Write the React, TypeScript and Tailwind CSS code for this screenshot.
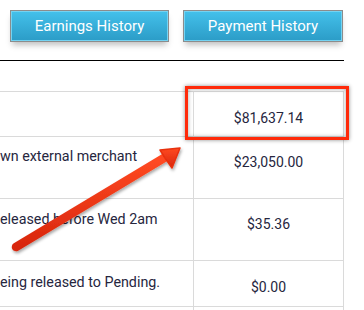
import React from "react";

const Btn = ({ label, w }: { label: string; w: string }) => (
  <div className={`${w} h-[32px] border border-[#8c8c8c] shadow-[0_5px_6px_-2px_rgba(0,0,0,0.25)]`}>
    <div className="h-full w-full border border-[#74d3f2] bg-gradient-to-b from-[#43c0ea] to-[#2c9dc8] flex items-center justify-center text-white text-[15px] leading-none font-normal">
      {label}
    </div>
  </div>
);

export default function App() {
  return (
    <div className="relative w-[364px] h-[310px] bg-white overflow-hidden font-['Roboto',sans-serif] text-[#26263e]">
      <div className="flex pt-[10px] pl-[10px] gap-[14px]">
        <Btn label="Earnings History" w="w-[159px]" />
        <Btn label="Payment History" w="w-[160px]" />
      </div>
      <div className="mt-[18px] w-[344px] h-px bg-black" />
      <div className="mt-[30px] w-[344px] border-t border-r border-[#dadada] text-[14px] leading-[20px]">
        <div className="flex h-[45px] border-b border-[#dadada]">
          <div className="w-[194px] border-r border-[#dadada]" />
          <div className="flex-1 text-center pt-[16px]">$81,637.14</div>
        </div>
        <div className="flex h-[62px] border-b border-[#dadada]">
          <div className="w-[194px] border-r border-[#dadada] pt-[9px] whitespace-nowrap overflow-hidden text-[14.3px]">wn external merchant</div>
          <div className="flex-1 text-center pt-[15px]">$23,050.00</div>
        </div>
        <div className="flex h-[62px] border-b border-[#dadada]">
          <div className="w-[194px] border-r border-[#dadada] pt-[10px] whitespace-nowrap overflow-hidden text-[14.3px]">eleased before Wed 2am</div>
          <div className="flex-1 text-center pt-[15px]">$35.36</div>
        </div>
        <div className="flex h-[46px] border-b border-[#dadada]">
          <div className="w-[194px] border-r border-[#dadada] pt-[11px] whitespace-nowrap overflow-hidden text-[14.3px]">eing released to Pending.</div>
          <div className="flex-1 text-center pt-[16px]">$0.00</div>
        </div>
        <div className="flex h-[40px]">
          <div className="w-[194px] border-r border-[#dadada]" />
          <div className="flex-1" />
        </div>
      </div>

      <div className="absolute left-[185px] top-[86px] w-[164px] h-[54px] border-[3.5px] border-[#ff2a0a] shadow-[0_0_4px_rgba(0,0,0,0.45),inset_0_0_4px_rgba(0,0,0,0.35)]" />

      <svg className="absolute left-0 top-0" width="364" height="310" viewBox="0 0 364 310">
        <defs>
          <linearGradient id="ag" x1="0" y1="0" x2="0" y2="1">
            <stop offset="0" stopColor="#ff4a22" />
            <stop offset="1" stopColor="#d8260c" />
          </linearGradient>
          <filter id="sh" x="-20%" y="-20%" width="140%" height="140%">
            <feDropShadow dx="1" dy="2" stdDeviation="1.5" floodColor="#000" floodOpacity="0.35" />
          </filter>
        </defs>
        <g filter="url(#sh)">
          <line x1="16" y1="247" x2="164" y2="158" stroke="url(#ag)" strokeWidth="8.5" strokeLinecap="round" />
          <path d="M180 148 L160 150 L165 158 L172 168 Z" fill="url(#ag)" stroke="#e8300f" strokeWidth="1.5" strokeLinejoin="round" />
        </g>
      </svg>
    </div>
  );
}
